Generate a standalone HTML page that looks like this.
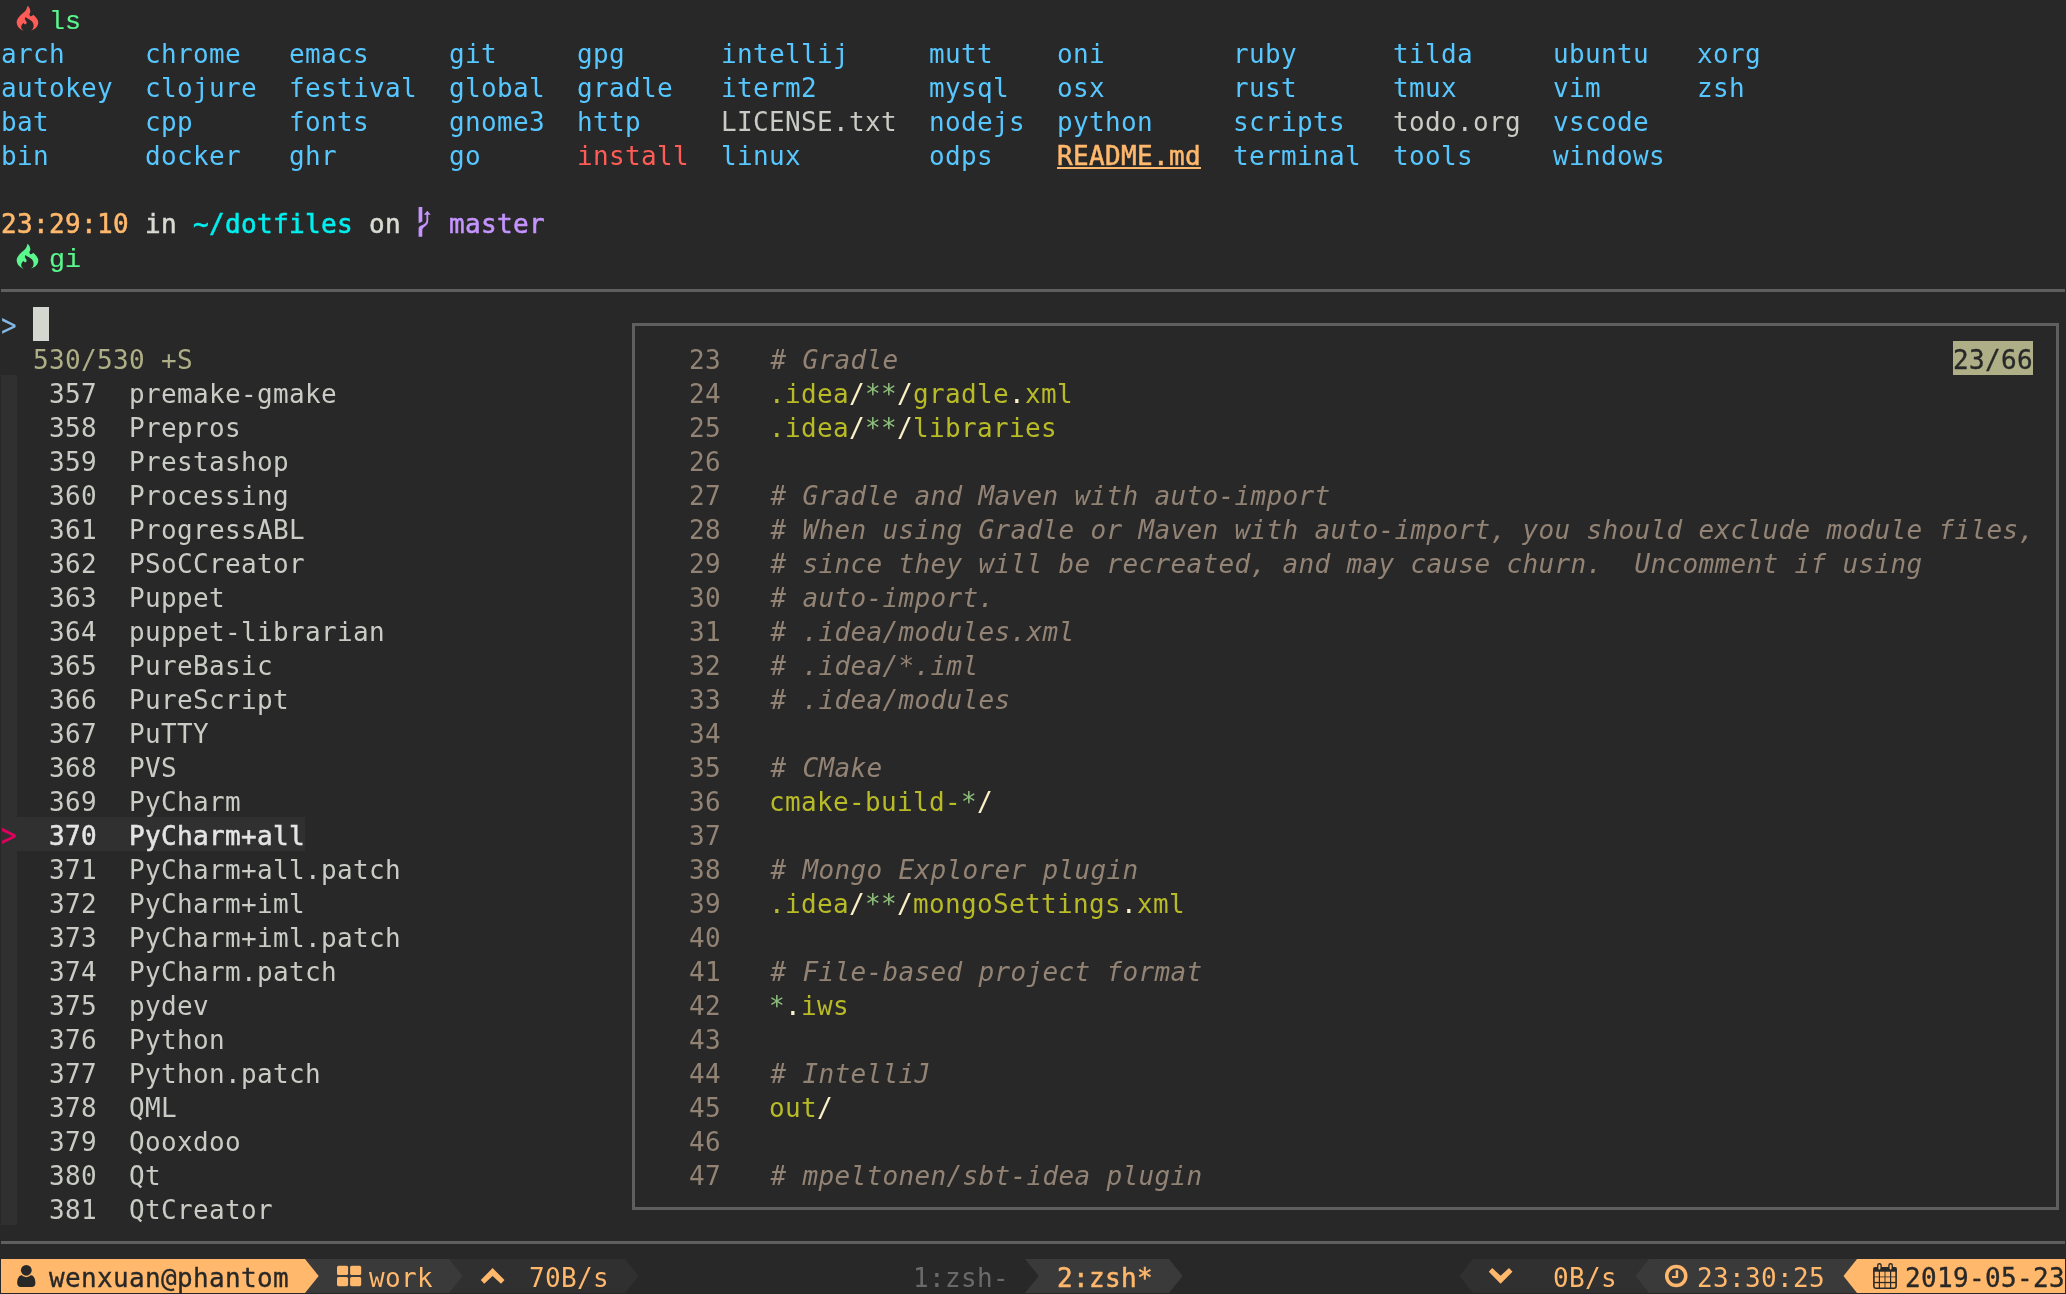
<!DOCTYPE html>
<html lang="en"><head><meta charset="utf-8"><title>tmux — zsh — fzf gitignore</title>
<style>
html,body{margin:0;padding:0;background:#282828;}
body{width:2066px;height:1294px;position:relative;overflow:hidden;
 font-family:"DejaVu Sans Mono","Liberation Mono",monospace;font-size:26.0px;line-height:34px;}
#term{position:absolute;left:0;top:0;width:2066px;height:1294px;overflow:hidden;z-index:0;will-change:transform;background:transparent}
.r{position:absolute;box-sizing:content-box}
.i{position:absolute;overflow:visible}
.t{position:absolute;white-space:pre;height:34px;line-height:34px;letter-spacing:0.3467px;
 padding-top:2px;font-kerning:none;font-variant-ligatures:none}
.b{font-weight:normal;-webkit-text-stroke:0.55px currentColor}
.it{font-style:italic;padding-left:1.5px}
.d{-webkit-text-stroke:0.35px currentColor}
.lm{font-family:"Liberation Mono","DejaVu Sans Mono",monospace;font-size:26.67px;letter-spacing:-0.0046px;padding-top:4px;-webkit-text-stroke:0.15px currentColor}
.gt{transform:scaleY(1.22);transform-origin:50% 60%}
.u{text-decoration:underline;text-decoration-thickness:2px;text-underline-offset:4px}
</style></head>
<body><div id="term">
<svg class="i" style="left:0px;top:0px" width="44" height="36" viewBox="0 0 44 36"><path fill="#ff5c57" d="M27.35 5.7 C27.62 5.97 28.54 6.63 29.00 7.30 C29.46 7.97 29.89 8.90 30.10 9.70 C30.31 10.50 30.37 11.30 30.25 12.10 C30.13 12.90 29.40 13.82 29.40 14.50 C29.40 15.18 30.11 15.92 30.25 16.20 C30.49 16.18 31.21 16.33 31.70 16.10 C32.19 15.87 32.95 15.02 33.20 14.80 C33.63 15.20 35.00 16.20 35.80 17.20 C36.60 18.20 37.60 19.80 38.00 20.80 C38.40 21.80 38.32 22.32 38.20 23.20 C38.08 24.08 37.86 25.17 37.30 26.10 C36.74 27.03 35.90 28.03 34.85 28.80 C33.80 29.57 31.64 30.38 31.00 30.70 C31.32 30.35 32.47 29.43 32.90 28.60 C33.33 27.77 33.60 26.68 33.60 25.70 C33.60 24.72 33.42 23.60 32.90 22.70 C32.38 21.80 31.38 20.98 30.50 20.30 C29.62 19.62 28.41 19.17 27.60 18.60 C26.79 18.03 25.97 17.18 25.65 16.90 C25.52 17.23 24.86 18.25 24.90 18.90 C24.94 19.55 25.60 20.20 25.90 20.80 C26.20 21.40 26.67 21.97 26.70 22.50 C26.73 23.03 26.43 23.72 26.10 24.00 C25.77 24.28 25.10 24.37 24.70 24.20 C24.30 24.03 23.87 23.20 23.70 23.00 C23.42 23.23 22.43 23.75 22.00 24.40 C21.57 25.05 21.15 26.08 21.15 26.90 C21.15 27.72 21.57 28.67 22.00 29.30 C22.43 29.93 23.42 30.47 23.70 30.70 C23.22 30.47 21.77 30.02 20.80 29.30 C19.83 28.58 18.58 27.50 17.90 26.40 C17.22 25.30 16.82 23.80 16.70 22.70 C16.58 21.60 16.75 20.83 17.20 19.80 C17.65 18.77 18.47 17.58 19.40 16.50 C20.32 15.42 21.71 14.32 22.75 13.30 C23.79 12.28 24.96 11.28 25.65 10.40 C26.34 9.52 26.62 8.78 26.90 8.00 C27.18 7.22 27.28 6.08 27.35 5.70 Z"/></svg>
<span class="t lm" style="left:49px;top:1px;color:#5af78e">ls</span>
<span class="t" style="left:1px;top:35px;color:#57c7ff">arch</span>
<span class="t" style="left:1px;top:69px;color:#57c7ff">autokey</span>
<span class="t" style="left:1px;top:103px;color:#57c7ff">bat</span>
<span class="t" style="left:1px;top:137px;color:#57c7ff">bin</span>
<span class="t" style="left:145px;top:35px;color:#57c7ff">chrome</span>
<span class="t" style="left:145px;top:69px;color:#57c7ff">clojure</span>
<span class="t" style="left:145px;top:103px;color:#57c7ff">cpp</span>
<span class="t" style="left:145px;top:137px;color:#57c7ff">docker</span>
<span class="t" style="left:289px;top:35px;color:#57c7ff">emacs</span>
<span class="t" style="left:289px;top:69px;color:#57c7ff">festival</span>
<span class="t" style="left:289px;top:103px;color:#57c7ff">fonts</span>
<span class="t" style="left:289px;top:137px;color:#57c7ff">ghr</span>
<span class="t" style="left:449px;top:35px;color:#57c7ff">git</span>
<span class="t" style="left:449px;top:69px;color:#57c7ff">global</span>
<span class="t" style="left:449px;top:103px;color:#57c7ff">gnome3</span>
<span class="t" style="left:449px;top:137px;color:#57c7ff">go</span>
<span class="t" style="left:577px;top:35px;color:#57c7ff">gpg</span>
<span class="t" style="left:577px;top:69px;color:#57c7ff">gradle</span>
<span class="t" style="left:577px;top:103px;color:#57c7ff">http</span>
<span class="t" style="left:577px;top:137px;color:#ff5c57">install</span>
<span class="t" style="left:721px;top:35px;color:#57c7ff">intellij</span>
<span class="t" style="left:721px;top:69px;color:#57c7ff">iterm2</span>
<span class="t" style="left:721px;top:103px;color:#c9ccc4">LICENSE.txt</span>
<span class="t" style="left:721px;top:137px;color:#57c7ff">linux</span>
<span class="t" style="left:929px;top:35px;color:#57c7ff">mutt</span>
<span class="t" style="left:929px;top:69px;color:#57c7ff">mysql</span>
<span class="t" style="left:929px;top:103px;color:#57c7ff">nodejs</span>
<span class="t" style="left:929px;top:137px;color:#57c7ff">odps</span>
<span class="t" style="left:1057px;top:35px;color:#57c7ff">oni</span>
<span class="t" style="left:1057px;top:69px;color:#57c7ff">osx</span>
<span class="t" style="left:1057px;top:103px;color:#57c7ff">python</span>
<div class="r" style="left:1057px;top:166.5px;width:144px;height:2.5px;background:#ffb86c"></div>
<span class="t b" style="left:1057px;top:137px;color:#ffb86c">README.md</span>
<span class="t" style="left:1233px;top:35px;color:#57c7ff">ruby</span>
<span class="t" style="left:1233px;top:69px;color:#57c7ff">rust</span>
<span class="t" style="left:1233px;top:103px;color:#57c7ff">scripts</span>
<span class="t" style="left:1233px;top:137px;color:#57c7ff">terminal</span>
<span class="t" style="left:1393px;top:35px;color:#57c7ff">tilda</span>
<span class="t" style="left:1393px;top:69px;color:#57c7ff">tmux</span>
<span class="t" style="left:1393px;top:103px;color:#c9ccc4">todo.org</span>
<span class="t" style="left:1393px;top:137px;color:#57c7ff">tools</span>
<span class="t" style="left:1553px;top:35px;color:#57c7ff">ubuntu</span>
<span class="t" style="left:1553px;top:69px;color:#57c7ff">vim</span>
<span class="t" style="left:1553px;top:103px;color:#57c7ff">vscode</span>
<span class="t" style="left:1553px;top:137px;color:#57c7ff">windows</span>
<span class="t" style="left:1697px;top:35px;color:#57c7ff">xorg</span>
<span class="t" style="left:1697px;top:69px;color:#57c7ff">zsh</span>
<span class="t b" style="left:1px;top:205px;color:#ffb86c">23:29:10</span>
<span class="t b" style="left:145px;top:205px;color:#d8dbd2">in</span>
<span class="t b" style="left:193px;top:205px;color:#00efef">~/dotfiles</span>
<span class="t b" style="left:369px;top:205px;color:#d8dbd2">on</span>
<svg class="i" style="left:417px;top:205px" width="16" height="34" viewBox="0 0 16 34"><path fill="#c594ff" d="M1.6 2.1 H5.3 V16.6 L1.6 18.2 Z"/><path fill="#c594ff" d="M1.6 31.8 V23.5 C1.6 19.5 9.4 20.5 9.4 15.5 V9.8 H6.9 L10.3 5.8 L13.7 9.8 H11.2 V16 C11.2 21.5 5.3 21 5.3 25.5 V31.8 Z"/></svg>
<span class="t b" style="left:449px;top:205px;color:#c594ff">master</span>
<svg class="i" style="left:0px;top:238px" width="44" height="36" viewBox="0 0 44 36"><path fill="#5af78e" d="M27.35 5.7 C27.62 5.97 28.54 6.63 29.00 7.30 C29.46 7.97 29.89 8.90 30.10 9.70 C30.31 10.50 30.37 11.30 30.25 12.10 C30.13 12.90 29.40 13.82 29.40 14.50 C29.40 15.18 30.11 15.92 30.25 16.20 C30.49 16.18 31.21 16.33 31.70 16.10 C32.19 15.87 32.95 15.02 33.20 14.80 C33.63 15.20 35.00 16.20 35.80 17.20 C36.60 18.20 37.60 19.80 38.00 20.80 C38.40 21.80 38.32 22.32 38.20 23.20 C38.08 24.08 37.86 25.17 37.30 26.10 C36.74 27.03 35.90 28.03 34.85 28.80 C33.80 29.57 31.64 30.38 31.00 30.70 C31.32 30.35 32.47 29.43 32.90 28.60 C33.33 27.77 33.60 26.68 33.60 25.70 C33.60 24.72 33.42 23.60 32.90 22.70 C32.38 21.80 31.38 20.98 30.50 20.30 C29.62 19.62 28.41 19.17 27.60 18.60 C26.79 18.03 25.97 17.18 25.65 16.90 C25.52 17.23 24.86 18.25 24.90 18.90 C24.94 19.55 25.60 20.20 25.90 20.80 C26.20 21.40 26.67 21.97 26.70 22.50 C26.73 23.03 26.43 23.72 26.10 24.00 C25.77 24.28 25.10 24.37 24.70 24.20 C24.30 24.03 23.87 23.20 23.70 23.00 C23.42 23.23 22.43 23.75 22.00 24.40 C21.57 25.05 21.15 26.08 21.15 26.90 C21.15 27.72 21.57 28.67 22.00 29.30 C22.43 29.93 23.42 30.47 23.70 30.70 C23.22 30.47 21.77 30.02 20.80 29.30 C19.83 28.58 18.58 27.50 17.90 26.40 C17.22 25.30 16.82 23.80 16.70 22.70 C16.58 21.60 16.75 20.83 17.20 19.80 C17.65 18.77 18.47 17.58 19.40 16.50 C20.32 15.42 21.71 14.32 22.75 13.30 C23.79 12.28 24.96 11.28 25.65 10.40 C26.34 9.52 26.62 8.78 26.90 8.00 C27.18 7.22 27.28 6.08 27.35 5.70 Z"/></svg>
<span class="t lm" style="left:49px;top:239px;color:#5af78e">gi</span>
<div class="r" style="left:1px;top:289px;width:2064px;height:3px;background:#5f5f5f"></div>
<div class="r" style="left:1px;top:1241px;width:2064px;height:3px;background:#5f5f5f"></div>
<span class="t gt" style="left:1px;top:307px;color:#82b8e4">&gt;</span>
<div class="r" style="left:33px;top:307px;width:16px;height:34px;background:#d3d7cf;"></div>
<span class="t" style="left:33px;top:341px;color:#afaf87">530/530 +S</span>
<div class="r" style="left:1px;top:375px;width:16px;height:850px;background:#303030;"></div>
<span class="t" style="left:49px;top:375px;color:#c9ccc4">357</span>
<span class="t" style="left:129px;top:375px;color:#c9ccc4">premake-gmake</span>
<span class="t" style="left:49px;top:409px;color:#c9ccc4">358</span>
<span class="t" style="left:129px;top:409px;color:#c9ccc4">Prepros</span>
<span class="t" style="left:49px;top:443px;color:#c9ccc4">359</span>
<span class="t" style="left:129px;top:443px;color:#c9ccc4">Prestashop</span>
<span class="t" style="left:49px;top:477px;color:#c9ccc4">360</span>
<span class="t" style="left:129px;top:477px;color:#c9ccc4">Processing</span>
<span class="t" style="left:49px;top:511px;color:#c9ccc4">361</span>
<span class="t" style="left:129px;top:511px;color:#c9ccc4">ProgressABL</span>
<span class="t" style="left:49px;top:545px;color:#c9ccc4">362</span>
<span class="t" style="left:129px;top:545px;color:#c9ccc4">PSoCCreator</span>
<span class="t" style="left:49px;top:579px;color:#c9ccc4">363</span>
<span class="t" style="left:129px;top:579px;color:#c9ccc4">Puppet</span>
<span class="t" style="left:49px;top:613px;color:#c9ccc4">364</span>
<span class="t" style="left:129px;top:613px;color:#c9ccc4">puppet-librarian</span>
<span class="t" style="left:49px;top:647px;color:#c9ccc4">365</span>
<span class="t" style="left:129px;top:647px;color:#c9ccc4">PureBasic</span>
<span class="t" style="left:49px;top:681px;color:#c9ccc4">366</span>
<span class="t" style="left:129px;top:681px;color:#c9ccc4">PureScript</span>
<span class="t" style="left:49px;top:715px;color:#c9ccc4">367</span>
<span class="t" style="left:129px;top:715px;color:#c9ccc4">PuTTY</span>
<span class="t" style="left:49px;top:749px;color:#c9ccc4">368</span>
<span class="t" style="left:129px;top:749px;color:#c9ccc4">PVS</span>
<span class="t" style="left:49px;top:783px;color:#c9ccc4">369</span>
<span class="t" style="left:129px;top:783px;color:#c9ccc4">PyCharm</span>
<div class="r" style="left:1px;top:817px;width:304px;height:34px;background:#303030;"></div>
<span class="t gt d" style="left:1px;top:817px;color:#e0005f">&gt;</span>
<span class="t b" style="left:49px;top:817px;color:#e4e4e4">370</span>
<span class="t b" style="left:129px;top:817px;color:#e4e4e4">PyCharm+all</span>
<span class="t" style="left:49px;top:851px;color:#c9ccc4">371</span>
<span class="t" style="left:129px;top:851px;color:#c9ccc4">PyCharm+all.patch</span>
<span class="t" style="left:49px;top:885px;color:#c9ccc4">372</span>
<span class="t" style="left:129px;top:885px;color:#c9ccc4">PyCharm+iml</span>
<span class="t" style="left:49px;top:919px;color:#c9ccc4">373</span>
<span class="t" style="left:129px;top:919px;color:#c9ccc4">PyCharm+iml.patch</span>
<span class="t" style="left:49px;top:953px;color:#c9ccc4">374</span>
<span class="t" style="left:129px;top:953px;color:#c9ccc4">PyCharm.patch</span>
<span class="t" style="left:49px;top:987px;color:#c9ccc4">375</span>
<span class="t" style="left:129px;top:987px;color:#c9ccc4">pydev</span>
<span class="t" style="left:49px;top:1021px;color:#c9ccc4">376</span>
<span class="t" style="left:129px;top:1021px;color:#c9ccc4">Python</span>
<span class="t" style="left:49px;top:1055px;color:#c9ccc4">377</span>
<span class="t" style="left:129px;top:1055px;color:#c9ccc4">Python.patch</span>
<span class="t" style="left:49px;top:1089px;color:#c9ccc4">378</span>
<span class="t" style="left:129px;top:1089px;color:#c9ccc4">QML</span>
<span class="t" style="left:49px;top:1123px;color:#c9ccc4">379</span>
<span class="t" style="left:129px;top:1123px;color:#c9ccc4">Qooxdoo</span>
<span class="t" style="left:49px;top:1157px;color:#c9ccc4">380</span>
<span class="t" style="left:129px;top:1157px;color:#c9ccc4">Qt</span>
<span class="t" style="left:49px;top:1191px;color:#c9ccc4">381</span>
<span class="t" style="left:129px;top:1191px;color:#c9ccc4">QtCreator</span>
<div class="r" style="left:632px;top:323px;width:1421px;height:881px;border:3px solid #5f5f5f"></div>
<div class="r" style="left:1953px;top:341px;width:80px;height:34px;background:#afaf87;"></div>
<span class="t d" style="left:1953px;top:341px;color:#282828">23/66</span>
<span class="t" style="left:689px;top:341px;color:#928374">23</span>
<span class="t it" style="left:769px;top:341px;color:#928374"># Gradle</span>
<span class="t" style="left:689px;top:375px;color:#928374">24</span>
<span class="t" style="left:769px;top:375px;color:#b8bb26">.idea</span>
<span class="t" style="left:849px;top:375px;color:#fbf1c7">/</span>
<span class="t" style="left:865px;top:375px;color:#8ec07c">**</span>
<span class="t" style="left:897px;top:375px;color:#fbf1c7">/</span>
<span class="t" style="left:913px;top:375px;color:#b8bb26">gradle</span>
<span class="t" style="left:1009px;top:375px;color:#fbf1c7">.</span>
<span class="t" style="left:1025px;top:375px;color:#b8bb26">xml</span>
<span class="t" style="left:689px;top:409px;color:#928374">25</span>
<span class="t" style="left:769px;top:409px;color:#b8bb26">.idea</span>
<span class="t" style="left:849px;top:409px;color:#fbf1c7">/</span>
<span class="t" style="left:865px;top:409px;color:#8ec07c">**</span>
<span class="t" style="left:897px;top:409px;color:#fbf1c7">/</span>
<span class="t" style="left:913px;top:409px;color:#b8bb26">libraries</span>
<span class="t" style="left:689px;top:443px;color:#928374">26</span>
<span class="t" style="left:689px;top:477px;color:#928374">27</span>
<span class="t it" style="left:769px;top:477px;color:#928374"># Gradle and Maven with auto-import</span>
<span class="t" style="left:689px;top:511px;color:#928374">28</span>
<span class="t it" style="left:769px;top:511px;color:#928374"># When using Gradle or Maven with auto-import, you should exclude module files,</span>
<span class="t" style="left:689px;top:545px;color:#928374">29</span>
<span class="t it" style="left:769px;top:545px;color:#928374"># since they will be recreated, and may cause churn.  Uncomment if using</span>
<span class="t" style="left:689px;top:579px;color:#928374">30</span>
<span class="t it" style="left:769px;top:579px;color:#928374"># auto-import.</span>
<span class="t" style="left:689px;top:613px;color:#928374">31</span>
<span class="t it" style="left:769px;top:613px;color:#928374"># .idea/modules.xml</span>
<span class="t" style="left:689px;top:647px;color:#928374">32</span>
<span class="t it" style="left:769px;top:647px;color:#928374"># .idea/*.iml</span>
<span class="t" style="left:689px;top:681px;color:#928374">33</span>
<span class="t it" style="left:769px;top:681px;color:#928374"># .idea/modules</span>
<span class="t" style="left:689px;top:715px;color:#928374">34</span>
<span class="t" style="left:689px;top:749px;color:#928374">35</span>
<span class="t it" style="left:769px;top:749px;color:#928374"># CMake</span>
<span class="t" style="left:689px;top:783px;color:#928374">36</span>
<span class="t" style="left:769px;top:783px;color:#b8bb26">cmake-build-</span>
<span class="t" style="left:961px;top:783px;color:#8ec07c">*</span>
<span class="t" style="left:977px;top:783px;color:#fbf1c7">/</span>
<span class="t" style="left:689px;top:817px;color:#928374">37</span>
<span class="t" style="left:689px;top:851px;color:#928374">38</span>
<span class="t it" style="left:769px;top:851px;color:#928374"># Mongo Explorer plugin</span>
<span class="t" style="left:689px;top:885px;color:#928374">39</span>
<span class="t" style="left:769px;top:885px;color:#b8bb26">.idea</span>
<span class="t" style="left:849px;top:885px;color:#fbf1c7">/</span>
<span class="t" style="left:865px;top:885px;color:#8ec07c">**</span>
<span class="t" style="left:897px;top:885px;color:#fbf1c7">/</span>
<span class="t" style="left:913px;top:885px;color:#b8bb26">mongoSettings</span>
<span class="t" style="left:1121px;top:885px;color:#fbf1c7">.</span>
<span class="t" style="left:1137px;top:885px;color:#b8bb26">xml</span>
<span class="t" style="left:689px;top:919px;color:#928374">40</span>
<span class="t" style="left:689px;top:953px;color:#928374">41</span>
<span class="t it" style="left:769px;top:953px;color:#928374"># File-based project format</span>
<span class="t" style="left:689px;top:987px;color:#928374">42</span>
<span class="t" style="left:769px;top:987px;color:#8ec07c">*</span>
<span class="t" style="left:785px;top:987px;color:#fbf1c7">.</span>
<span class="t" style="left:801px;top:987px;color:#b8bb26">iws</span>
<span class="t" style="left:689px;top:1021px;color:#928374">43</span>
<span class="t" style="left:689px;top:1055px;color:#928374">44</span>
<span class="t it" style="left:769px;top:1055px;color:#928374"># IntelliJ</span>
<span class="t" style="left:689px;top:1089px;color:#928374">45</span>
<span class="t" style="left:769px;top:1089px;color:#b8bb26">out</span>
<span class="t" style="left:817px;top:1089px;color:#fbf1c7">/</span>
<span class="t" style="left:689px;top:1123px;color:#928374">46</span>
<span class="t" style="left:689px;top:1157px;color:#928374">47</span>
<span class="t it" style="left:769px;top:1157px;color:#928374"># mpeltonen/sbt-idea plugin</span>
<div class="r" style="left:1px;top:1259px;width:304px;height:34px;background:#ffb86c;"></div>
<svg class="i" style="left:305px;top:1259px" width="16" height="34" viewBox="0 0 16 34"><path fill="#ffb86c" d="M0 0 L13.7 17 L0 34 Z"/></svg>
<div class="r" style="left:305px;top:1259px;width:160px;height:34px;background:#3a3a3a;z-index:-1"></div>
<svg class="i" style="left:17px;top:1259px" width="20" height="34" viewBox="0 0 20 34"><circle cx="9.3" cy="11.3" r="5.4" fill="#282828"/><path fill="#282828" d="M0.2 24 C0.2 19.5 2.2 16.3 4.6 16.3 C5.6 16.3 6.5 18.2 9.3 18.2 C12.1 18.2 13 16.3 14 16.3 C16.4 16.3 18.4 19.5 18.4 24 C18.4 26.6 16.9 28 14.9 28 H3.7 C1.7 28 0.2 26.6 0.2 24 Z"/></svg>
<span class="t d" style="left:49px;top:1259px;color:#282828">wenxuan@phantom</span>
<svg class="i" style="left:337px;top:1259px" width="26" height="34" viewBox="0 0 26 34"><rect x="0" y="6.8" width="11.1" height="9.2" rx="1.6" fill="#ffb86c"/><rect x="0" y="18.0" width="11.1" height="9.2" rx="1.6" fill="#ffb86c"/><rect x="13.1" y="6.8" width="11.1" height="9.2" rx="1.6" fill="#ffb86c"/><rect x="13.1" y="18.0" width="11.1" height="9.2" rx="1.6" fill="#ffb86c"/></svg>
<span class="t" style="left:369px;top:1259px;color:#ffb86c">work</span>
<div class="r" style="left:449px;top:1259px;width:192px;height:34px;background:#303030;z-index:-2"></div>
<div class="r" style="left:449px;top:1259px;width:16px;height:34px;background:#303030;z-index:-1"></div>
<svg class="i" style="left:449px;top:1259px" width="16" height="34" viewBox="0 0 16 34"><path fill="#3a3a3a" d="M0 0 L13.7 17 L0 34 Z"/></svg>
<svg class="i" style="left:481px;top:1259px" width="26" height="34" viewBox="0 0 26 34"><polygon fill="#ffb86c" points="11.6,9.1 23.5,21.1 20.0,24.8 11.6,17.1 3.2,24.8 -0.2,21.1"/></svg>
<span class="t" style="left:529px;top:1259px;color:#ffb86c">70B/s</span>
<div class="r" style="left:625px;top:1259px;width:16px;height:34px;background:#282828;z-index:-1"></div>
<svg class="i" style="left:625px;top:1259px" width="16" height="34" viewBox="0 0 16 34"><path fill="#303030" d="M0 0 L13.7 17 L0 34 Z"/></svg>
<span class="t" style="left:913px;top:1259px;color:#6a6a6a">1:zsh-</span>
<div class="r" style="left:1025px;top:1259px;width:144px;height:34px;background:#3a3a3a;"></div>
<svg class="i" style="left:1025px;top:1259px" width="16" height="34" viewBox="0 0 16 34"><path fill="#282828" d="M0 0 L13.7 17 L0 34 Z"/></svg>
<span class="t b" style="left:1057px;top:1259px;color:#ffb86c">2:zsh*</span>
<svg class="i" style="left:1169px;top:1259px" width="16" height="34" viewBox="0 0 16 34"><path fill="#3a3a3a" d="M0 0 L13.7 17 L0 34 Z"/></svg>
<svg class="i" style="left:1457px;top:1259px" width="16" height="34" viewBox="0 0 16 34"><path fill="#303030" d="M16 0 L2.5 17 L16 34 Z"/></svg>
<div class="r" style="left:1473px;top:1259px;width:160px;height:34px;background:#303030;"></div>
<svg class="i" style="left:1489px;top:1259px" width="26" height="34" viewBox="0 0 26 34"><polygon fill="#ffb86c" points="11.6,24.8 23.5,12.8 20.0,9.1 11.6,16.8 3.2,9.1 -0.2,12.8"/></svg>
<span class="t" style="left:1553px;top:1259px;color:#ffb86c">0B/s</span>
<div class="r" style="left:1633px;top:1259px;width:16px;height:34px;background:#303030;"></div>
<svg class="i" style="left:1633px;top:1259px" width="16" height="34" viewBox="0 0 16 34"><path fill="#3a3a3a" d="M16 0 L2.5 17 L16 34 Z"/></svg>
<div class="r" style="left:1649px;top:1259px;width:192px;height:34px;background:#3a3a3a;"></div>
<svg class="i" style="left:1665px;top:1259px" width="24" height="34" viewBox="0 0 24 34"><circle cx="11.25" cy="17.05" r="9.55" fill="none" stroke="#ffb86c" stroke-width="3.5"/><path fill="#ffb86c" d="M10.7 11.3 H13.2 V19 H7 V16.9 H10.7 Z"/></svg>
<span class="t" style="left:1697px;top:1259px;color:#ffb86c">23:30:25</span>
<div class="r" style="left:1841px;top:1259px;width:16px;height:34px;background:#3a3a3a;"></div>
<svg class="i" style="left:1841px;top:1259px" width="16" height="34" viewBox="0 0 16 34"><path fill="#ffb86c" d="M16 0 L2.5 17 L16 34 Z"/></svg>
<div class="r" style="left:1857px;top:1259px;width:208px;height:34px;background:#ffb86c;"></div>
<svg class="i" style="left:1873px;top:1259px" width="24" height="34" viewBox="0 0 24 34"><rect x="0.9" y="8.9" width="22.2" height="20.3" rx="1.6" fill="none" stroke="#282828" stroke-width="1.6"/><rect x="0.5" y="8.5" width="23" height="4.2" fill="#282828"/><rect x="4.1000000000000005" y="4.1" width="4.6" height="7.4" rx="2.2" fill="#282828"/><rect x="5.4" y="5.6" width="2.0" height="5.0" rx="1" fill="#ffb86c"/><rect x="15.3" y="4.1" width="4.6" height="7.4" rx="2.2" fill="#282828"/><rect x="16.6" y="5.6" width="2.0" height="5.0" rx="1" fill="#ffb86c"/><rect x="5.800000000000001" y="12" width="1.2" height="17" fill="#282828" opacity="1"/><rect x="11.4" y="12" width="1.2" height="17" fill="#282828" opacity="0.75"/><rect x="17.0" y="12" width="1.2" height="17" fill="#282828" opacity="1"/><rect x="1" y="17.2" width="22" height="1.3" fill="#282828" opacity="0.6"/><rect x="1" y="22.9" width="22" height="1.3" fill="#282828" opacity="1"/></svg>
<span class="t d" style="left:1905px;top:1259px;color:#282828">2019-05-23</span>
</div></body></html>
